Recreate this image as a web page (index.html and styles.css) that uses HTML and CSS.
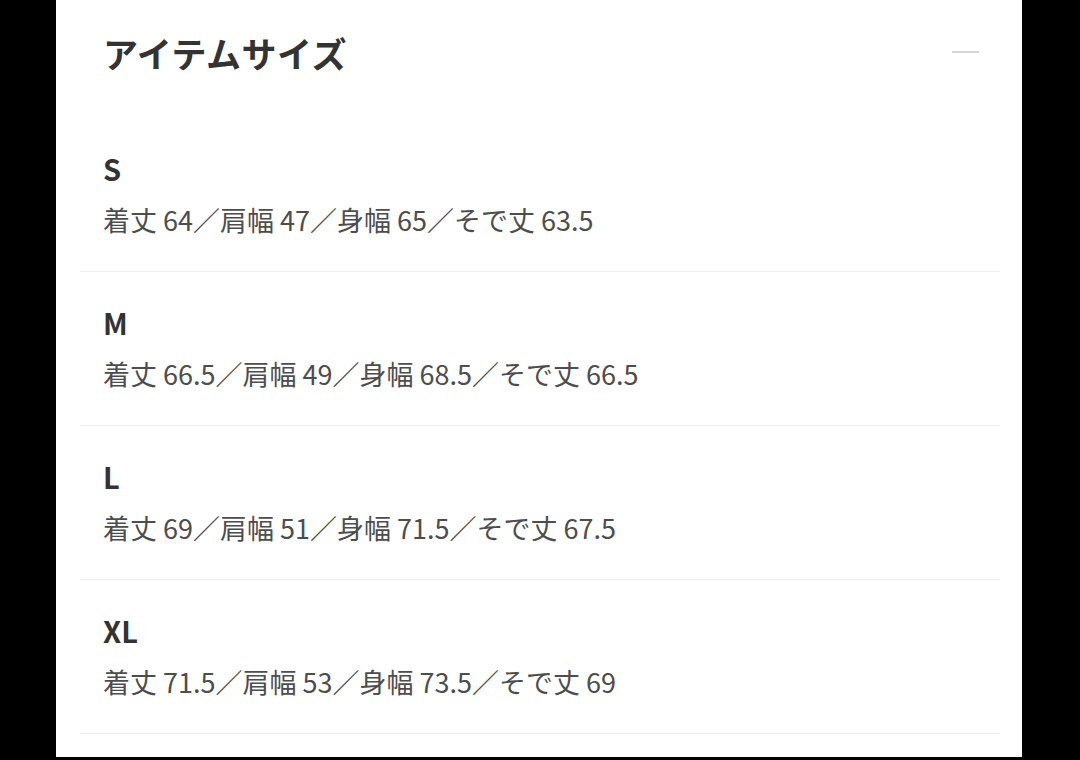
FILE: index.html
```html
<!DOCTYPE html>
<html lang="ja">
<head>
<meta charset="utf-8">
<link rel="stylesheet" href="styles.css">
</head>
<body>
<section class="panel">
  <header class="head">
    <h2 class="title">アイテムサイズ</h2>
    <span class="collapse" aria-label="閉じる"></span>
  </header>
  <ul class="sizes">
    <li class="size first">
      <div class="label">S</div>
      <div class="detail">着丈 64／肩幅 47／身幅 65／そで丈 63.5</div>
    </li>
    <li class="size">
      <div class="label">M</div>
      <div class="detail">着丈 66.5／肩幅 49／身幅 68.5／そで丈 66.5</div>
    </li>
    <li class="size">
      <div class="label">L</div>
      <div class="detail">着丈 69／肩幅 51／身幅 71.5／そで丈 67.5</div>
    </li>
    <li class="size">
      <div class="label">XL</div>
      <div class="detail">着丈 71.5／肩幅 53／身幅 73.5／そで丈 69</div>
    </li>
  </ul>
</section>
</body>
</html>
```

FILE: styles.css
```css
html, body {
  margin: 0;
  padding: 0;
  background: #000;
  height: 100%;
}
body {
  font-family: "Noto Sans CJK JP", "Noto Sans", sans-serif;
  overflow: hidden;
}
.panel {
  margin-left: 56px;
  width: 966px;
  height: 757px;
  background: #fff;
  overflow: hidden;
}
.head {
  height: 104px;
  display: flex;
  align-items: center;
  justify-content: space-between;
  padding: 0 43px 0 47px;
}
.title {
  margin: 0;
  font-size: 35px;
  font-weight: 700;
  color: #333;
  line-height: 1;
  letter-spacing: 0.5px;
}
.collapse {
  width: 27px;
  height: 2px;
  background: #d4d4d4;
}
.sizes {
  list-style: none;
  margin: 0;
  padding: 0 22px 0 24px;
}
.size {
  padding: 30px 0 31px 23px;
  border-bottom: 1px solid #f0f0f0;
}
.size.first {
  padding-top: 44px;
}
.label {
  font-size: 29px;
  font-weight: 700;
  color: #333;
  line-height: 40px;
}
.detail {
  margin-top: 12px;
  font-size: 27px;
  color: #4d4d4d;
  line-height: 40px;
  white-space: nowrap;
}
```
